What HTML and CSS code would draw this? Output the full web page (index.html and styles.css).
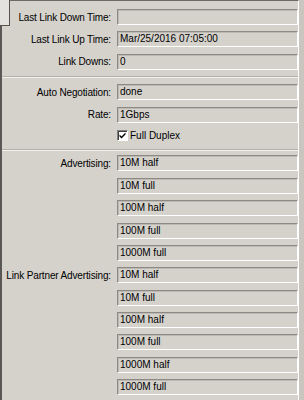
FILE: index.html
```html
<!DOCTYPE html>
<html lang="en">
<head>
  <meta charset="UTF-8" />
  <title>Interface Status</title>
  <link rel="stylesheet" href="styles.css">
</head>
<body>
  <div class="panel">
    <div class="notch"></div>

    <div class="row"><label>Last Link Down Time:</label><div class="field"></div></div>
    <div class="row"><label>Last Link Up Time:</label><div class="field">Mar/25/2016 07:05:00</div></div>
    <div class="row"><label>Link Downs:</label><div class="field">0</div></div>

    <div class="sep sep-a"></div>

    <div class="row"><label>Auto Negotiation:</label><div class="field">done</div></div>
    <div class="row"><label>Rate:</label><div class="field">1Gbps</div></div>
    <div class="row row-check">
      <label></label>
      <span class="check">
        <svg width="9" height="9" viewBox="0 0 9 9"><path d="M1.5 3.5 L3.5 5.5 L7.5 1.5 L7.5 3.5 L3.5 7.5 L1.5 5.5 Z" fill="#000"/></svg>
      </span>
      <span class="check-text">Full Duplex</span>
    </div>

    <div class="sep sep-b"></div>

    <div class="row"><label>Advertising:</label><div class="field">10M half</div></div>
    <div class="row"><label></label><div class="field">10M full</div></div>
    <div class="row"><label></label><div class="field">100M half</div></div>
    <div class="row"><label></label><div class="field">100M full</div></div>
    <div class="row"><label></label><div class="field">1000M full</div></div>

    <div class="row"><label>Link Partner Advertising:</label><div class="field">10M half</div></div>
    <div class="row"><label></label><div class="field">10M full</div></div>
    <div class="row"><label></label><div class="field">100M half</div></div>
    <div class="row"><label></label><div class="field">100M full</div></div>
    <div class="row"><label></label><div class="field">1000M half</div></div>
    <div class="row"><label></label><div class="field">1000M full</div></div>
  </div>
</body>
</html>
```

FILE: styles.css
```css
* { box-sizing: border-box; margin: 0; padding: 0; }
body {
  background: #c9c6c0;
  font-family: "Liberation Sans", Arial, sans-serif;
  font-size: 10px;
  color: #000;
  width: 304px;
  height: 400px;
  overflow: hidden;
}
.panel {
  position: relative;
  width: 299px;
  height: 400px;
  background: #d5d2cc;
  border-left: 2px solid #5a5854;
  border-top: 1px solid #6c6a66;
  border-right: 1px solid #fff;
  padding-top: 8px;
}
.notch {
  position: absolute;
  left: -2px;
  top: -1px;
  width: 10px;
  height: 26px;
  background: #e4e2de;
  border-right: 1px solid #55524e;
  border-bottom: 1px solid #55524e;
}
.row {
  display: flex;
  align-items: center;
  height: 16px;
  margin-bottom: 6.4px;
}
.row label {
  width: 109px;
  flex-shrink: 0;
  text-align: right;
  letter-spacing: -0.15px;
  white-space: nowrap;
}
.field {
  margin-left: 6px;
  width: 182px;
  height: 16px;
  border: 1px solid;
  border-color: #8d8a85 #fff #fff #8d8a85;
  box-shadow: inset 1px 1px #bcb9b3;
  padding-left: 2px;
  line-height: 14px;
  white-space: nowrap;
}
.row-check { height: 14px; }
.check {
  margin-left: 6px;
  width: 11px;
  height: 11px;
  background: #fff;
  border: 1px solid;
  border-color: #808080 #fff #fff #808080;
  box-shadow: inset 1px 1px #404040;
  display: flex;
  align-items: center;
  justify-content: center;
}
.check svg { display: block; }
.check-text { margin-left: 2px; }
.sep {
  border-top: 1px solid #b3b0aa;
  border-bottom: 1px solid #f2f1ee;
}
.sep-a { margin: 1px 0 6px; }
.sep-b { margin: 1px 0 4px; }
```
